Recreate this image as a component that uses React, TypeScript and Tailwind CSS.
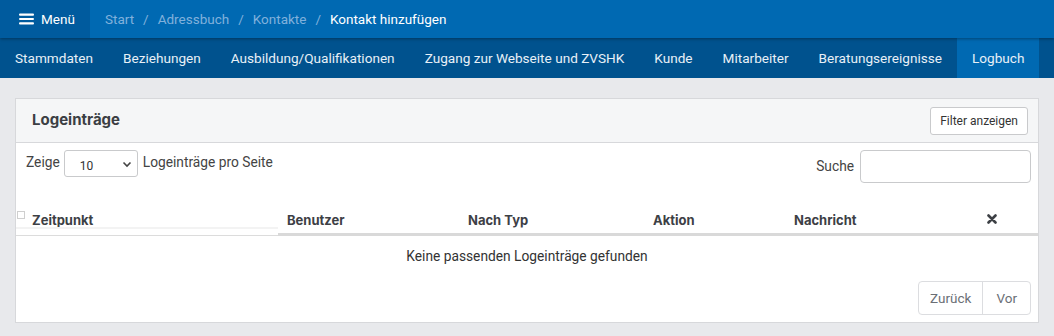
import React from "react";

const navItems = [
  "Stammdaten",
  "Beziehungen",
  "Ausbildung/Qualifikationen",
  "Zugang zur Webseite und ZVSHK",
  "Kunde",
  "Mitarbeiter",
  "Beratungsereignisse",
  "Logbuch",
];

const columns = [
  { label: "Benutzer", w: "w-[181px]" },
  { label: "Nach Typ", w: "w-[185px]" },
  { label: "Aktion", w: "w-[141px]" },
  { label: "Nachricht", w: "w-[193px]" },
];

export default function App() {
  return (
    <div className="min-h-[336px] bg-[#e8e9ec] font-['Roboto',sans-serif]">
      {/* Top bar */}
      <div className="relative z-10 flex h-[38px] items-stretch bg-[#0069b2] shadow-[0_1px_3px_rgba(0,0,0,0.35)]">
        <button className="flex w-[90px] items-center gap-[7px] bg-[#005b9e] pl-[19px] text-[13.5px] text-white">
          <svg width="15" height="12" viewBox="0 0 15 12">
            <rect x="0" y="0.5" width="15" height="2.2" rx="1" fill="white" />
            <rect x="0" y="4.9" width="15" height="2.2" rx="1" fill="white" />
            <rect x="0" y="9.3" width="15" height="2.2" rx="1" fill="white" />
          </svg>
          <span>Menü</span>
        </button>
        <div className="flex items-center pl-[15px] text-[13.5px]">
          <span className="text-[#80b1dc]">Start</span>
          <span className="px-[9px] text-[#80b1dc]">/</span>
          <span className="text-[#80b1dc]">Adressbuch</span>
          <span className="px-[9px] text-[#80b1dc]">/</span>
          <span className="text-[#80b1dc]">Kontakte</span>
          <span className="px-[9px] text-[#80b1dc]">/</span>
          <span className="text-white">Kontakt hinzufügen</span>
        </div>
      </div>

      {/* Tabs */}
      <div className="flex h-[40px] bg-[#00528e]">
        {navItems.map((item) => (
          <div
            key={item}
            className={`flex items-center whitespace-nowrap px-[15px] text-[13.6px] text-[#e8f0f7] ${
              item === "Logbuch" ? "bg-[#0069b2]" : ""
            }`}
          >
            {item}
          </div>
        ))}
      </div>

      {/* Card */}
      <div className="mx-[15px] mt-[20px] w-[1024px] border border-[#d7d8db] bg-white">
        <div className="flex h-[44px] items-center justify-between border-b border-[#d7d8db] bg-[#f5f6f7] pl-[16px] pr-[10px]">
          <h2 className="font-['Inter',sans-serif] text-[15px] font-bold text-[#3b3e43]">Logeinträge</h2>
          <button className="h-[28px] rounded-[3px] border border-[#c9cacc] bg-white px-[9px] text-[12px] text-[#333]">
            Filter anzeigen
          </button>
        </div>

        <div className="pt-[7px]">
          <div className="flex items-start justify-between pl-[10px] pr-[7px]">
            <div className="flex items-center text-[13.75px] text-[#444]">
              <span className="-mt-[3px]">Zeige</span>
              <div className="ml-[4px] mr-[5px] flex h-[27px] w-[74px] items-center justify-between rounded-[3px] border border-[#c9cacc] pl-[15px] pr-[5px]">
                <span className="mt-[4px] text-[12px] text-[#333]">10</span>
                <svg width="10" height="10" viewBox="0 0 10 10" fill="none">
                  <path d="M1.5 3.5 L5 7 L8.5 3.5" stroke="#444" strokeWidth="1.6" />
                </svg>
              </div>
              <span className="-mt-[3px]">Logeinträge pro Seite</span>
            </div>
            <div className="flex items-center text-[13.75px] text-[#444]">
              <span className="mr-[6px]">Suche</span>
              <input className="h-[33px] w-[171px] rounded-[4px] border border-[#c9cacc] outline-none" />
            </div>
          </div>

          {/* Table header */}
          <div className="mt-[22px] flex font-['Inter',sans-serif] text-[13px] font-bold text-[#3d4045]">
            <div className="relative h-[31px] w-[262px] border-b border-[#dcdcdc] pl-[16px] pt-[7px] leading-[16px]">
              <span className="absolute left-[1px] top-[6px] h-[8px] w-[8px] border border-[#cfcfcf] bg-white" />
              <span className="absolute left-0 right-0 top-[22px] h-[2px] bg-[#f3f3f3]" />
              Zeitpunkt
            </div>
            {columns.map((c) => (
              <div
                key={c.label}
                className={`h-[31px] ${c.w} border-b-[3px] border-[#d9d9d9] pl-[9px] pt-[7px] leading-[16px]`}
              >
                {c.label}
              </div>
            ))}
            <div className="flex h-[31px] flex-1 justify-start border-b-[3px] border-[#d9d9d9] pl-[9px] pt-[9px]">
              <svg width="10" height="10" viewBox="0 0 10 10">
                <path d="M1.5 1.5 L8.5 8.5 M8.5 1.5 L1.5 8.5" stroke="#3d4045" strokeWidth="2.6" strokeLinecap="round" />
              </svg>
            </div>
          </div>

          <div className="flex h-[40px] items-center justify-center text-[13.75px] text-[#333]">
            Keine passenden Logeinträge gefunden
          </div>

          <div className="flex justify-end pb-[7px] pr-[7px] pt-[5px]">
            <div className="flex h-[34px] rounded-[4px] border border-[#dcdde0] text-[13.5px] text-[#6b6f76]">
              <span className="flex items-center border-r border-[#dcdde0] px-[11px]">Zurück</span>
              <span className="flex items-center px-[13px]">Vor</span>
            </div>
          </div>
        </div>
      </div>
    </div>
  );
}
